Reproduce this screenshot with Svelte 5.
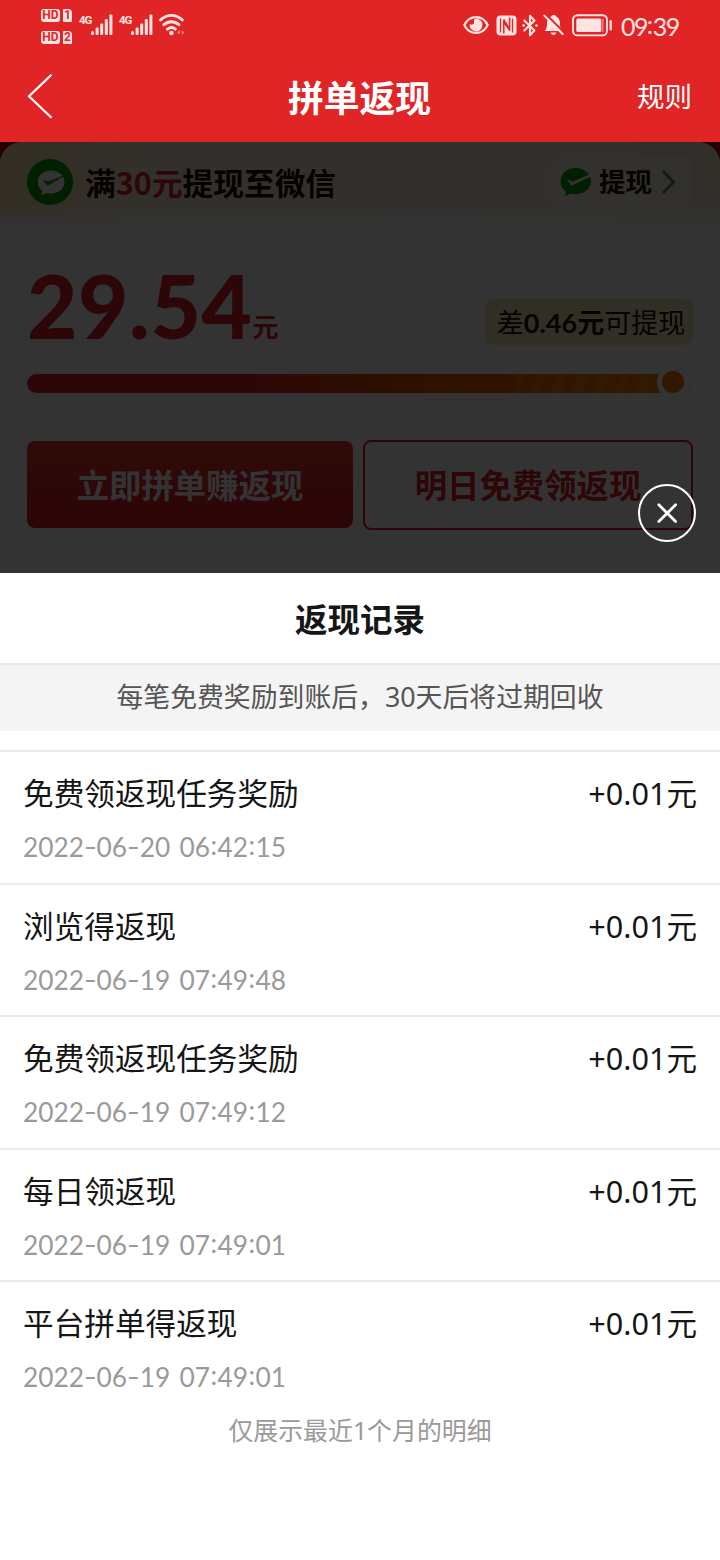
<script>
  const records = [
    { title: '免费领返现任务奖励', time: '2022-06-20 06:42:15', amount: '+0.01' },
    { title: '浏览得返现', time: '2022-06-19 07:49:48', amount: '+0.01' },
    { title: '免费领返现任务奖励', time: '2022-06-19 07:49:12', amount: '+0.01' },
    { title: '每日领返现', time: '2022-06-19 07:49:01', amount: '+0.01' },
    { title: '平台拼单得返现', time: '2022-06-19 07:49:01', amount: '+0.01' }
  ];
  const parts = (s) => s.split(/([-:])/);
</script>

{#snippet hd(n)}
  <div class="hd"><span class="hd-tag">HD</span><span class="hd-num">{n}</span></div>
{/snippet}

{#snippet signal()}
  <div class="signal">
    <span>4G</span>
    <svg width="23" height="22" viewBox="0 0 23 22" fill="#ffe3e1">
      <rect x="0" y="17" width="3" height="4" rx="1.5" />
      <rect x="4.6" y="13.5" width="3" height="7.5" rx="1" />
      <rect x="9.2" y="9.5" width="3" height="11.5" rx="1" />
      <rect x="13.8" y="5" width="3" height="16" rx="1" />
      <rect x="18.4" y="0.5" width="3" height="20.5" rx="1" />
    </svg>
  </div>
{/snippet}

<div class="screen">
  <div class="status">
    <div class="hds">{@render hd(1)}{@render hd(2)}</div>
    {@render signal()}
    {@render signal()}
    <svg class="wifi" width="27" height="24" viewBox="0 0 27 24" fill="none" stroke="#ffe3e1" stroke-width="2.9" stroke-linecap="round">
      <path d="M1.6 6.9C8.200 .9 16.600 .9 23.200 6.900M4.900 11.700C9.400 7.700 15.400 7.700 19.900 11.700M8.500 16.100C11 14 13.800 14 16.300 16.100" />
      <circle cx="12.400" cy="20" r="2.200" fill="#ffe3e1" stroke="none" />
      <path d="M20.800 17.200v4.400l-2.700-2.200zM22.800 17.200v4.400l2.700-2.200z" fill="#f08a86" stroke="none" />
    </svg>
    <div class="spacer"></div>
    <svg class="eye" width="26" height="20" viewBox="0 0 26 20">
      <path d="M1.300 10C6.500-.6 19.500-.6 24.700 10C19.500 20.600 6.500 20.600 1.300 10Z" fill="none" stroke="#ffe3e1" stroke-width="2.200" />
      <path d="M13 3.600a6.400 6.400 0 1 1-6.300 5.300c1.500 1.400 4.800.8 4.300-1.700C10.800 5.600 11.300 4 13 3.600Z" fill="#ffe3e1" />
    </svg>
    <svg class="nfc" width="21" height="21" viewBox="0 0 21 21">
      <rect x=".5" y=".5" width="20" height="20" rx="4" fill="#ffe3e1" />
      <path d="M4.500 3.500v14M16.500 3.500v14" fill="none" stroke="#e12526" stroke-width="1.300" />
      <path d="M7.800 18.500V7l6 8.500M13.600 2.500V14L7.600 4.500" fill="none" stroke="#e12526" stroke-width="1.500" />
    </svg>
    <svg class="bt" width="16" height="23" viewBox="0 0 16 23" fill="none" stroke="#ffe3e1" stroke-width="2.100" stroke-linejoin="round" stroke-linecap="round">
      <path d="M2.300 6.500 12.500 16.400 8 21.300V1.700l4.500 4.900L2.300 16.500" />
      <path d="M1.500 11.500h.2M14.400 11.500h.2" stroke-width="2.600" />
    </svg>
    <svg class="bell" width="21" height="22" viewBox="0 0 21 22">
      <path d="M8.200 2.500C9 .6 12.400.6 13 2.500c3.200 1.200 4 4 4 7.500 0 3.500.6 4.800 2 7H1.800c1.400-2.100 2.200-3.500 2.200-7 0-3.600.9-6.400 4.200-7.500ZM7.800 18.500h5.400c-.5 3.200-4.900 3.200-5.400 0Z" fill="#ffe3e1" />
      <path d="M2.500-.2 21.500 18.800" stroke="#e12526" stroke-width="2" />
      <path d="M1.300 1.600 19.600 20" stroke="#ffe3e1" stroke-width="2" stroke-linecap="round" />
    </svg>
    <svg class="battery" width="41" height="23" viewBox="0 0 41 23">
      <rect x="1" y="1.200" width="34" height="20.200" rx="4.500" fill="none" stroke="#ffe3e1" stroke-width="1.900" />
      <rect x="4.300" y="4.600" width="25" height="13.400" rx="1.500" fill="#ffe3e1" />
      <path d="M30.800 4.600v13.400" stroke="#ef7f7b" stroke-width="1.500" />
      <path d="M38.700 7.300v8" stroke="#ffe3e1" stroke-width="2.400" stroke-linecap="round" />
    </svg>
    <span class="clock">09<i>:</i>39</span>
  </div>

  <header class="nav">
    <svg width="26" height="46" viewBox="0 0 26 46" fill="none" stroke="#fff" stroke-width="2.200"><path d="M24.500 .7 2 22.200 24.500 43.700" /></svg>
    <h1>拼单返现</h1>
    <span class="rules">规则</span>
  </header>

  <section class="stage">
    <div class="card">
      <div class="banner">
        <svg width="46" height="46" viewBox="0 0 46 46">
          <circle cx="23" cy="23" r="23" fill="#07a000" />
          <path d="M24 11.500c7.500 0 13.500 5 13.500 11.500S31.500 34.500 24 34.500c-1.600 0-3.100-.2-4.500-.7L14.500 36.300l.8-4.500C12.500 29.700 10.800 26.500 10.800 23 10.800 16.500 16.500 11.500 24 11.500Z" fill="#fff" />
          <path d="M16.700 21.500 20.600 26.200 36 17.400 21 22.900Z" fill="#07a000" stroke="#07a000" stroke-width=".8" stroke-linejoin="round" />
        </svg>
        <p class="goal">满<em>30元</em>提现至微信</p>
        <div class="withdraw">
          <svg width="32" height="30" viewBox="0 0 32 30">
            <path d="M15.500 1C24 1 31 6.800 31 14.200S24 27.300 15.500 27.300c-1.800 0-3.500-.2-5-.7L5.200 29.200l.9-4.600C2.700 22.200 .5 18.500.5 14.200.5 6.800 7 1 15.500 1Z" fill="#07a000" />
            <path d="M7.200 12.300 11.500 18.700 30.500 9.400 29.500 7.600 12.500 14.700Z" fill="#fff" />
          </svg>
          <span>提现</span>
          <svg width="16" height="26" viewBox="0 0 16 26" fill="none" stroke="#777" stroke-width="3"><path d="M2 2 12.500 13 2 24" /></svg>
        </div>
      </div>

      <div class="balance">
        <div class="sum"><span class="num">29.54</span><span class="unit">元</span></div>
        <div class="gap-tip">差<b>0.46元</b>可提现</div>
      </div>

      <div class="track">
        <div class="fill"><i></i></div>
        <div class="knob"></div>
      </div>

      <div class="actions">
        <div class="btn solid">立即拼单赚返现</div>
        <div class="btn outline">明日免费领返现</div>
      </div>
    </div>
    <div class="mask"></div>
    <svg class="close" width="60" height="60" viewBox="0 0 60 60" fill="none" stroke="#fff">
      <circle cx="30" cy="30" r="28" stroke-width="2" />
      <path d="M21.800 21.800 38.600 38.600M38.600 21.800 21.800 38.600" stroke-width="2.800" stroke-linecap="round" />
    </svg>
  </section>

  <section class="sheet">
    <h2>返现记录</h2>
    <p class="notice">每笔免费奖励到账后，30天后将过期回收</p>
    <div class="list">
      {#each records as r}
        <div class="row">
          <div class="info">
            <span class="name">{r.title}</span>
            <span class="time">{#each parts(r.time) as p}{#if p === '-'}<i class="dash">-</i>{:else if p === ':'}<i class="colon">:</i>{:else}{p}{/if}{/each}</span>
          </div>
          <span class="amount">{r.amount}元</span>
        </div>
      {/each}
    </div>
    <p class="foot">仅展示最近1个月的明细</p>
  </section>
</div>

<style>
  :global(body) { background: #fff; }
  .screen {
    width: 720px;
    height: 1560px;
    overflow: hidden;
    background: #fff;
    color: #161616;
    font-family: "Noto Sans", "Noto Sans CJK SC", sans-serif;
  }
  h1, h2, p { margin: 0; }
  svg { display: block; flex: none; }

  .status {
    display: flex;
    align-items: flex-start;
    height: 52px;
    padding: 0 41px;
    box-sizing: border-box;
    background: #e12526;
    color: #ffe3e1;
  }
  .hds { display: flex; flex-direction: column; gap: 9px; padding-top: 9px; width: 38px; }
  .hd { display: flex; gap: 3px; height: 13px; font: 700 12px/13px Roboto, sans-serif; color: #e12526; }
  .hd span { background: #ffe3e1; text-align: center; }
  .hd-tag { width: 19px; border-radius: 3px; }
  .hd-num { width: 9px; border-radius: 1px 4px 1px 1px; }
  .signal { display: flex; width: 40px; padding-top: 14px; }
  .signal span { width: 12px; font: 700 11.500px/12px Roboto, sans-serif; letter-spacing: -1px; }
  .wifi { margin-top: 13px; }
  .spacer { flex: 1; }
  .eye { margin: 15px 7px 0 0; }
  .nfc { margin: 15px 5px 0 0; }
  .bt { margin: 14px 5px 0 0; }
  .bell { margin: 14px 8px 0 0; }
  .battery { margin: 14px 8px 0 0; }
  .clock { width: 58px; font-family: Lato, sans-serif; font-size: 25px; line-height: 52px; letter-spacing: -1.600px; white-space: nowrap; }
  .clock i { display: inline-block; width: 6px; font-style: normal; transform: translateY(-2px); }

  .nav {
    display: grid;
    grid-template-columns: 1fr auto 1fr;
    align-items: center;
    height: 90px;
    padding: 0 28px 0 27px;
    box-sizing: border-box;
    background: #e12526;
    color: #fff;
  }
  .nav h1 { font-size: 35.800px; line-height: 50px; font-weight: 700; padding-top: 2px; }
  .rules { justify-self: end; font-size: 27.500px; line-height: 40px; padding-bottom: 1px; }

  .stage { position: relative; height: 431px; background: #c00010; color: #1a0a08; }
  .card { height: 431px; border-radius: 22px 22px 0 0; background: #fff; overflow: hidden; }
  .mask { position: absolute; inset: 0; background: rgba(0, 0, 0, 0.8); }
  .close { position: absolute; left: 637px; top: 341px; }

  .banner {
    display: flex;
    align-items: center;
    height: 84px;
    padding: 0 27px 4px;
    box-sizing: border-box;
    background: linear-gradient(180deg, rgba(255, 255, 255, 0) 75%, #fff 100%), linear-gradient(90deg, #ffe3b0 0, #fbefd8 20%, #fbf0e4 60%, #f8ebd4 100%);
  }
  .goal { flex: 1; margin-left: 12px; font-family: "Noto Sans CJK SC", sans-serif; font-size: 30.700px; font-weight: 700; line-height: 44px; }
  .goal em { font-style: normal; color: #e12526; }
  .withdraw {
    display: flex;
    align-items: center;
    height: 52px;
    width: 150px;
    padding-left: 17px;
    box-sizing: border-box;
    border-radius: 26px 6px 6px 26px;
    background: rgba(255, 255, 255, 0.3);
  }
  .withdraw span { margin: 0 9px 0 7px; font-size: 26.500px; font-weight: 700; line-height: 40px; }

  .balance { display: flex; justify-content: space-between; height: 148px; padding: 0 27px; }
  .sum { display: flex; align-items: baseline; height: 120px; margin-top: 20px; color: #e0202a; }
  .num { font-family: Lato, sans-serif; font-size: 87px; line-height: 120px; font-weight: 900; letter-spacing: 0.600px; }
  .unit { font-size: 26px; font-weight: 700; transform: translateY(-2px); }
  .gap-tip {
    height: 46px;
    width: 208px;
    padding-left: 4px;
    box-sizing: border-box;
    margin-top: 73px;
    border-radius: 8px;
    background: #f5ebb4;
    font-size: 27px;
    line-height: 47px;
    text-align: center;
    white-space: nowrap;
  }
  .gap-tip b { font-family: Lato, "Noto Sans CJK SC", sans-serif; }

  .track { display: flex; align-items: center; height: 19px; margin: 0 27px; border-radius: 10px; background: #f3f3f3; }
  .fill { display: flex; justify-content: flex-end; width: 634px; height: 19px; border-radius: 10px 0 0 10px; background: linear-gradient(90deg, #e0262a 0, #e0262a 35%, #e04b00 55%, #ee6500 78%, #f57a00 100%); overflow: hidden; }
  .fill i { width: 144px; background: repeating-linear-gradient(115deg, rgba(255, 160, 40, 0.35) 0 9px, transparent 9px 19px); }
  .knob { width: 22px; height: 22px; margin: 0 0 3px -4px; border: 5px solid #fff; border-radius: 50%; background: #ee7200; }

  .actions { display: flex; gap: 10px; margin: 47px 27px 0; }
  .btn { height: 90px; box-sizing: border-box; border-radius: 8px; font-family: "Noto Sans CJK SC", sans-serif; font-size: 32.400px; font-weight: 700; text-align: center; }
  .solid { width: 326px; height: 87px; margin-top: 1px; line-height: 85px; color: #fff; background: linear-gradient(#e63a30, #dc1820); }
  .outline { width: 330px; border: 2px solid #e0202a; line-height: 84px; color: #e0202a; }

  h2 { height: 90px; font-size: 32.500px; line-height: 93px; font-weight: 700; text-align: center; }
  .notice { height: 68px; box-sizing: border-box; border-top: 2px solid #e8e8e8; background: #f4f4f4; color: #555; font-size: 26.850px; line-height: 64px; text-align: center; }
  .list { margin-top: 19px; }
  .row { display: flex; justify-content: space-between; height: 132.500px; padding: 19px 23px 0; box-sizing: border-box; border-top: 2px solid #ebebeb; }
  .info { display: flex; flex-direction: column; }
  .name { font-size: 30.650px; line-height: 44px; }
  .time { margin-top: 13px; font-family: Lato, sans-serif; font-size: 26.300px; line-height: 39px; word-spacing: 2.500px; color: #9a9a9a; white-space: nowrap; }
  .time i { display: inline-block; font-style: normal; text-align: center; }
  .dash { width: 12.600px; transform: translateY(-1px) scaleX(1.350); }
  .colon { width: 7.500px; transform: translateY(-2px); }
  .amount { font-size: 30.600px; line-height: 44px; }
  .foot { font-size: 24.900px; line-height: 34px; color: #9a9a9a; text-align: center; }
</style>
